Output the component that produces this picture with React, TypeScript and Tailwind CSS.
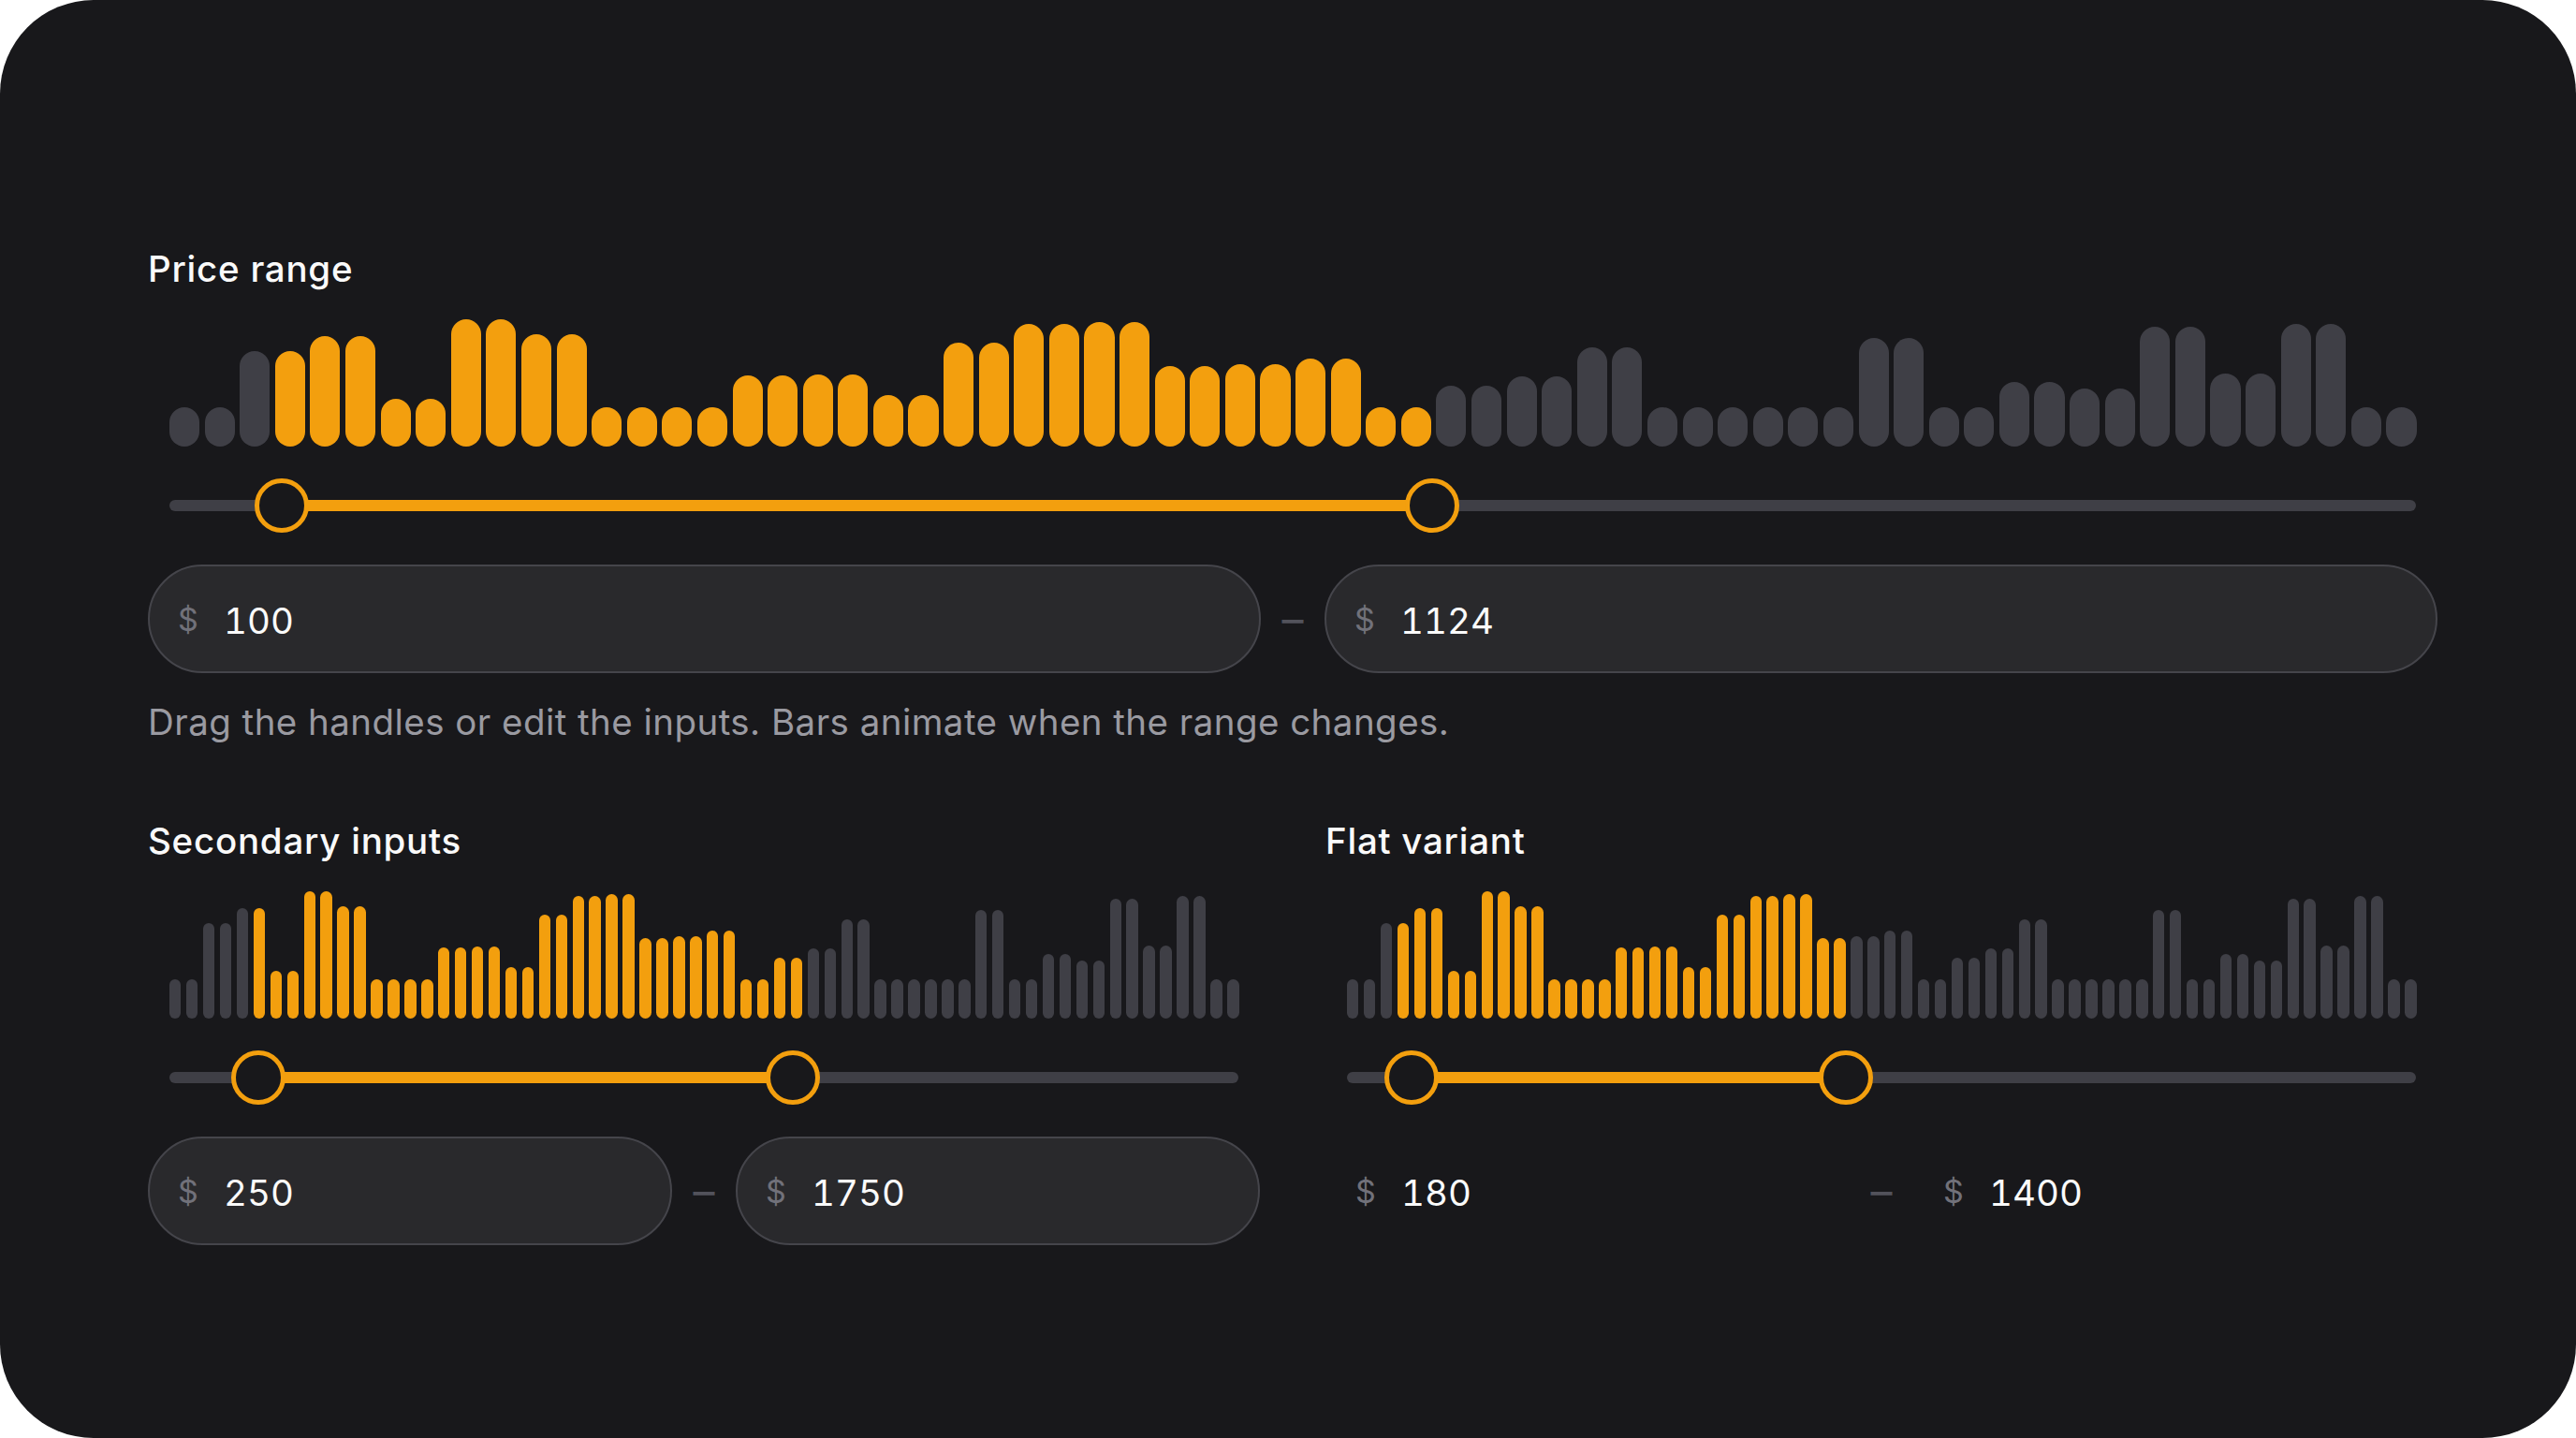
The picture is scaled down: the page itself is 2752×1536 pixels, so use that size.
const HEIGHTS = [
  42, 42, 102, 102, 118, 118, 51, 51, 136, 136, 120, 120, 42, 42, 42, 42,
  76, 76, 77, 77, 55, 55, 111, 111, 131, 131, 133, 133, 86, 86, 88, 88,
  94, 94, 42, 42, 65, 65, 75, 75, 106, 106, 42, 42, 42, 42, 42, 42,
  116, 116, 42, 42, 69, 69, 62, 62, 128, 128, 78, 78, 131, 131, 42, 42,
];

type HistogramProps = { from: number; to: number; low: number; high: number };

function Histogram({ from, to, low, high }: HistogramProps) {
  return (
    <div className="flex flex-col px-[23px] pt-[25px]">
      <div className="flex h-[137px] items-end gap-[5.5px]">
        {HEIGHTS.map((h, i) => (
          <div
            key={i}
            className={i >= from && i < to ? "flex-1 rounded-full bg-[#f39f0e]" : "flex-1 rounded-full bg-[#3f3f46]"}
            style={{ height: h }}
          />
        ))}
      </div>
      <div className="relative mt-[34px] h-[58px]">
        <div className="absolute inset-x-0 top-[23px] h-[12px] rounded-full bg-[#3f3f46]" />
        <div
          className="absolute top-[23px] h-[12px] bg-[#f39f0e]"
          style={{ left: `${low}%`, width: `${high - low}%` }}
        />
        <Thumb at={low} />
        <Thumb at={high} />
      </div>
    </div>
  );
}

function Thumb({ at }: { at: number }) {
  return (
    <div
      className="absolute top-0 h-[58px] w-[58px] -translate-x-1/2 rounded-full border-[5.5px] border-[#f39f0e] bg-[#18181b]"
      style={{ left: `${at}%` }}
    />
  );
}

function Field({ value, flat }: { value: string; flat?: boolean }) {
  return (
    <div
      className={
        flat
          ? "flex h-[116px] flex-1 items-center border-[2.5px] border-transparent pl-[30px]"
          : "flex h-[116px] flex-1 items-center rounded-full border-[2.5px] border-[#45454b] bg-[#29292c] pl-[30px]"
      }
    >
      <span className="w-[49px] pt-[1px] text-[34px] leading-none text-[#71717a]">$</span>
      <span className="pt-[4px] text-[38.5px] leading-none text-[#fafafa] tabular-nums">{value}</span>
    </div>
  );
}

function Fields({ low, high, flat }: { low: string; high: string; flat?: boolean }) {
  return (
    <div className="mt-[34px] flex items-center gap-[22px]">
      <Field value={low} flat={flat} />
      <span className="w-[24px] text-center text-[46px] leading-none text-[#52525b]">–</span>
      <Field value={high} flat={flat} />
    </div>
  );
}

function Label({ children }: { children: string }) {
  return <div className="text-[38.5px] leading-[55px] font-[450] tracking-[0.75px] text-[#fafafa]">{children}</div>;
}

export default function App() {
  return (
    <div className="h-[1536px] w-[2752px] overflow-hidden bg-white font-['Inter',sans-serif]">
      <div className="flex h-full flex-col rounded-[100px] bg-[#18181b] pt-[260px] pr-[148px] pl-[158px]">
        <section>
          <Label>Price range</Label>
          <Histogram from={3} to={36} low={5} high={56.2} />
          <Fields low="100" high="1124" />
          <p className="mt-[25px] text-[38.5px] leading-[55px] tracking-[0.45px] text-[#9a9aa1]">
            Drag the handles or edit the inputs. Bars animate when the range changes.
          </p>
        </section>
        <div className="mt-[72px] grid grid-cols-2 gap-[70px]">
          <section>
            <Label>Secondary inputs</Label>
            <Histogram from={5} to={38} low={8.33} high={58.33} />
            <Fields low="250" high="1750" />
          </section>
          <section>
            <Label>Flat variant</Label>
            <Histogram from={3} to={30} low={6} high={46.67} />
            <Fields low="180" high="1400" flat />
          </section>
        </div>
      </div>
    </div>
  );
}
